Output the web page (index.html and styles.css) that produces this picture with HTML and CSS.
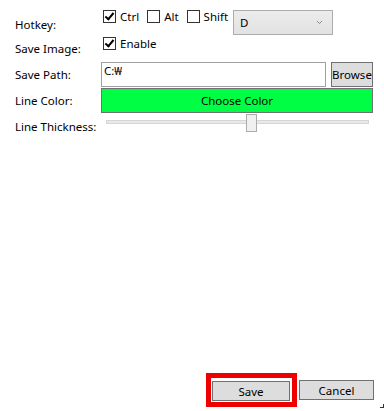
FILE: index.html
```html
<!DOCTYPE html>
<html lang="ko">
<head>
  <meta charset="UTF-8" />
  <title>Settings</title>
  <meta name="viewport" content="width=device-width, initial-scale=1.0" />
  <link rel="stylesheet" href="styles.css">
</head>
<body>
  <div class="form">
    <label class="lbl hotkey-lbl">Hotkey:</label>
    <div class="hotkey-row">
      <span class="check on"></span><span class="opt">Ctrl</span>
      <span class="check"></span><span class="opt">Alt</span>
      <span class="check"></span><span class="opt">Shift</span>
      <div class="combo">
        <span>D</span>
        <svg width="7" height="5" viewBox="0 0 7 5"><path d="M1 1 L3.5 3.5 L6 1" fill="none" stroke="#888" stroke-width="1"/></svg>
      </div>
    </div>

    <label class="lbl img-lbl">Save Image:</label>
    <div class="image-row">
      <span class="check on"></span><span class="opt">Enable</span>
    </div>

    <label class="lbl">Save Path:</label>
    <div class="path-row">
      <div class="textbox">C:₩</div>
      <button class="btn browse">Browse</button>
    </div>

    <label class="lbl">Line Color:</label>
    <button class="color-btn">Choose Color</button>

    <label class="lbl thick-lbl">Line Thickness:</label>
    <div class="slider">
      <div class="track"></div>
      <div class="thumb"></div>
    </div>
  </div>

  <div class="footer">
    <div class="highlight"><button class="btn save">Save</button></div>
    <button class="btn cancel">Cancel</button>
  </div>
  <div class="grip"></div>
</body>
</html>
```

FILE: styles.css
```css
html, body {
  margin: 0;
  height: 100%;
}

body {
  font-family: "Noto Sans", "Noto Sans CJK KR", sans-serif;
  font-size: 11.5px;
  color: #000;
  background: #fff;
  display: flex;
  flex-direction: column;
  position: relative;
  overflow: hidden;
}

.form {
  display: grid;
  grid-template-columns: 86px 1fr;
  grid-template-rows: 25px 27px 26px 25px 19px;
  padding: 10px 11px 0 15px;
}

.lbl {
  display: flex;
  align-items: center;
  line-height: 1;
  white-space: nowrap;
}

.hotkey-lbl { padding-top: 5px; }
.img-lbl { padding-top: 0; }
.thick-lbl { padding-top: 9px; }

.hotkey-row, .image-row {
  display: flex;
  align-items: flex-start;
  padding-left: 2px;
}

.image-row { padding-top: 2px; }

.check {
  width: 11px;
  height: 11px;
  border: 1px solid #333;
  background: #fff;
  position: relative;
  flex: none;
}

.check.on::after {
  content: "";
  position: absolute;
  left: 3px;
  top: 0px;
  width: 3px;
  height: 7px;
  border: solid #000;
  border-width: 0 2px 2px 0;
  transform: rotate(40deg);
}

.opt {
  margin-left: 4px;
  margin-right: 8px;
  line-height: 13px;
}

.combo {
  margin-left: -3px;
  border: 1px solid #acacac;
  background: linear-gradient(#ececec, #e2e2e2);
  display: flex;
  align-items: center;
  justify-content: space-between;
  padding: 0 9px 0 6px;
  box-sizing: border-box;
  width: 100px;
  height: 25px;
}

.path-row {
  display: flex;
  gap: 5px;
  height: 25px;
}

.textbox {
  flex: 1;
  border: 1px solid #a0a0a0;
  padding: 0 2px;
  line-height: 16px;
}

.btn {
  font-family: inherit;
  font-size: 11.5px;
  background: #dddddd;
  border: 1px solid #707070;
  color: #000;
  padding: 0;
  cursor: pointer;
}

.browse {
  width: 42px;
  height: 25px;
}

.color-btn {
  font-family: inherit;
  font-size: 11.5px;
  background: #00ff44;
  border: 1px solid #707070;
  height: 25px;
  padding: 0;
  color: #000;
}

.slider {
  position: relative;
  height: 19px;
}

.track {
  position: absolute;
  left: 5px;
  right: 4px;
  top: 7px;
  height: 2px;
  background: #e7eaea;
  border: 1px solid #d6d6d6;
}

.thumb {
  position: absolute;
  left: 145px;
  top: 1px;
  width: 9px;
  height: 16px;
  background: #f0f0f0;
  border: 1px solid #acacac;
}

.footer {
  margin-top: auto;
  display: flex;
  justify-content: flex-end;
  align-items: center;
  gap: 2px;
  padding: 0 10px 4px 0;
}

.highlight {
  border: 5px solid #ee0000;
  padding: 3px 2px 1px 1px;
  background: #fff;
}

.save {
  display: block;
  width: 78px;
  height: 20px;
}

.cancel {
  width: 75px;
  height: 20px;
}

.grip {
  position: absolute;
  right: 0;
  bottom: 3px;
  width: 3px;
  height: 3px;
  border-right: 1px solid #333;
  border-bottom: 1px solid #333;
}
```
